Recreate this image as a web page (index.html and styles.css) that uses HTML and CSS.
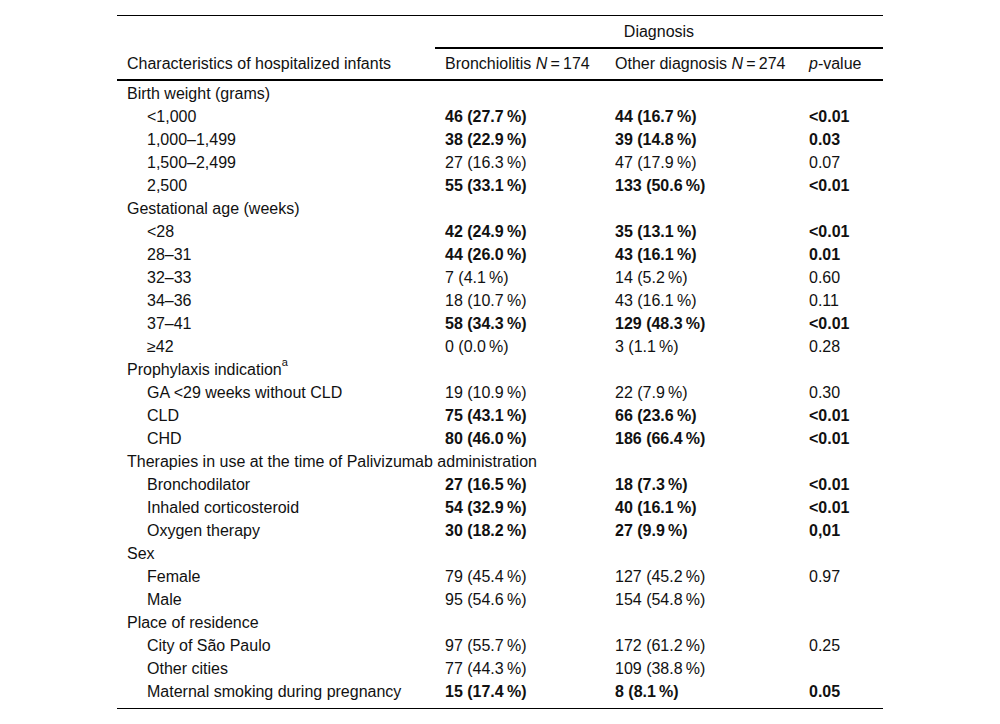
FILE: index.html
```html
<!DOCTYPE html>
<html>
<head>
<meta charset="utf-8">
<link rel="stylesheet" href="styles.css">
</head>
<body>
<table class="tbl">
  <colgroup>
    <col class="c1"><col class="c2"><col class="c3"><col class="c4">
  </colgroup>
  <thead>
    <tr class="h1">
      <th rowspan="2" class="hc">Characteristics of hospitalized infants</th>
      <th colspan="3" class="diag">Diagnosis</th>
    </tr>
    <tr class="h2">
      <th>Bronchiolitis <i>N</i>&#8201;=&#8201;174</th>
      <th>Other diagnosis <i>N</i>&#8201;=&#8201;274</th>
      <th><i>p</i>-value</th>
    </tr>
  </thead>
  <tbody>
    <tr><td>Birth weight (grams)</td><td></td><td></td><td></td></tr>
    <tr><td class="ind">&lt;1,000</td><td class="b">46 (27.7&#8201;%)</td><td class="b">44 (16.7&#8201;%)</td><td class="b">&lt;0.01</td></tr>
    <tr><td class="ind">1,000–1,499</td><td class="b">38 (22.9&#8201;%)</td><td class="b">39 (14.8&#8201;%)</td><td class="b">0.03</td></tr>
    <tr><td class="ind">1,500–2,499</td><td>27 (16.3&#8201;%)</td><td>47 (17.9&#8201;%)</td><td>0.07</td></tr>
    <tr><td class="ind">2,500</td><td class="b">55 (33.1&#8201;%)</td><td class="b">133 (50.6&#8201;%)</td><td class="b">&lt;0.01</td></tr>
    <tr><td>Gestational age (weeks)</td><td></td><td></td><td></td></tr>
    <tr><td class="ind">&lt;28</td><td class="b">42 (24.9&#8201;%)</td><td class="b">35 (13.1&#8201;%)</td><td class="b">&lt;0.01</td></tr>
    <tr><td class="ind">28–31</td><td class="b">44 (26.0&#8201;%)</td><td class="b">43 (16.1&#8201;%)</td><td class="b">0.01</td></tr>
    <tr><td class="ind">32–33</td><td>7 (4.1&#8201;%)</td><td>14 (5.2&#8201;%)</td><td>0.60</td></tr>
    <tr><td class="ind">34–36</td><td>18 (10.7&#8201;%)</td><td>43 (16.1&#8201;%)</td><td>0.11</td></tr>
    <tr><td class="ind">37–41</td><td class="b">58 (34.3&#8201;%)</td><td class="b">129 (48.3&#8201;%)</td><td class="b">&lt;0.01</td></tr>
    <tr><td class="ind">≥42</td><td>0 (0.0&#8201;%)</td><td>3 (1.1&#8201;%)</td><td>0.28</td></tr>
    <tr><td>Prophylaxis indication<sup>a</sup></td><td></td><td></td><td></td></tr>
    <tr><td class="ind">GA &lt;29 weeks without CLD</td><td>19 (10.9&#8201;%)</td><td>22 (7.9&#8201;%)</td><td>0.30</td></tr>
    <tr><td class="ind">CLD</td><td class="b">75 (43.1&#8201;%)</td><td class="b">66 (23.6&#8201;%)</td><td class="b">&lt;0.01</td></tr>
    <tr><td class="ind">CHD</td><td class="b">80 (46.0&#8201;%)</td><td class="b">186 (66.4&#8201;%)</td><td class="b">&lt;0.01</td></tr>
    <tr><td class="nowrap">Therapies in use at the time of Palivizumab administration</td><td></td><td></td><td></td></tr>
    <tr><td class="ind">Bronchodilator</td><td class="b">27 (16.5&#8201;%)</td><td class="b">18 (7.3&#8201;%)</td><td class="b">&lt;0.01</td></tr>
    <tr><td class="ind">Inhaled corticosteroid</td><td class="b">54 (32.9&#8201;%)</td><td class="b">40 (16.1&#8201;%)</td><td class="b">&lt;0.01</td></tr>
    <tr><td class="ind">Oxygen therapy</td><td class="b">30 (18.2&#8201;%)</td><td class="b">27 (9.9&#8201;%)</td><td class="b">0,01</td></tr>
    <tr><td>Sex</td><td></td><td></td><td></td></tr>
    <tr><td class="ind">Female</td><td>79 (45.4&#8201;%)</td><td>127 (45.2&#8201;%)</td><td>0.97</td></tr>
    <tr><td class="ind">Male</td><td>95 (54.6&#8201;%)</td><td>154 (54.8&#8201;%)</td><td></td></tr>
    <tr><td>Place of residence</td><td></td><td></td><td></td></tr>
    <tr><td class="ind">City of São Paulo</td><td>97 (55.7&#8201;%)</td><td>172 (61.2&#8201;%)</td><td>0.25</td></tr>
    <tr><td class="ind">Other cities</td><td>77 (44.3&#8201;%)</td><td>109 (38.8&#8201;%)</td><td></td></tr>
    <tr class="last"><td class="ind">Maternal smoking during pregnancy</td><td class="b">15 (17.4&#8201;%)</td><td class="b">8 (8.1&#8201;%)</td><td class="b">0.05</td></tr>
  </tbody>
</table>
</body>
</html>
```
FILE: styles.css
```css
html, body {
  margin: 0;
  padding: 0;
  background: #fff;
}
body {
  font-family: "Liberation Sans", Arial, sans-serif;
  font-size: 16px;
  color: #111;
}
.tbl {
  width: 766px;
  margin: 15px auto 0;
  border-collapse: separate;
  border-spacing: 0;
  border-top: 1px solid #000;
  border-bottom: 1px solid #000;
  table-layout: fixed;
}
.c1 { width: 318px; }
.c2 { width: 170px; }
.c3 { width: 194px; }
.c4 { width: 84px; }
th, td {
  text-align: left;
  font-weight: normal;
  padding: 0 10px;
  white-space: nowrap;
}
.h1 th {
  height: 31px;
  line-height: 31px;
}
.diag {
  text-align: center;
  border-bottom: 2px solid #000;
}
.hc {
  vertical-align: bottom;
  border-bottom: 2px solid #000;
  line-height: 30px;
}
.h2 th {
  height: 30px;
  line-height: 30px;
  border-bottom: 2px solid #000;
}
td {
  height: 20px;
  line-height: 20px;
  padding-top: 3px;
  vertical-align: top;
}
td.ind {
  padding-left: 30px;
}
td.b {
  font-weight: bold;
}
.last td {
  height: 26px;
}
sup {
  font-size: 11px;
  line-height: 0;
  vertical-align: 9px;
}
```
